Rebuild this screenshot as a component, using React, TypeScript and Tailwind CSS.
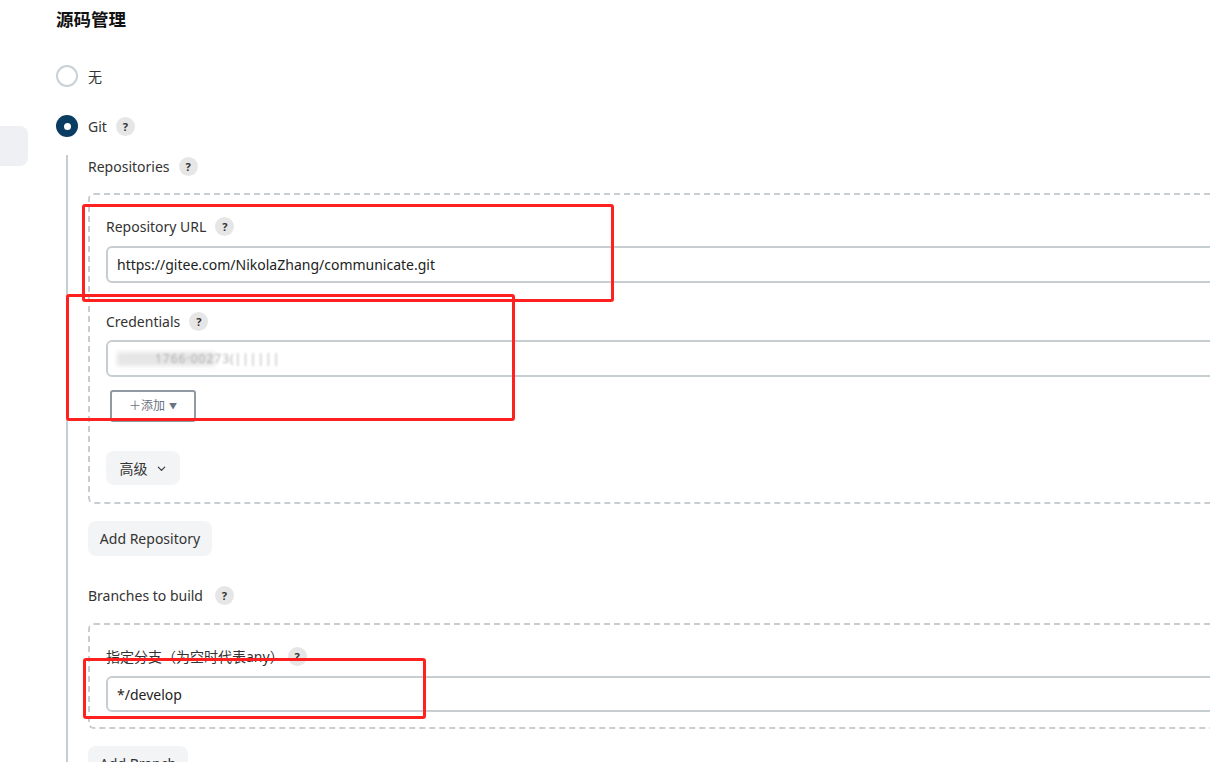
import React from "react";

function Help() {
  return (
    <span className="inline-flex h-[19px] w-[19px] items-center justify-center rounded-full bg-[#e6e6e6] text-[11px] font-bold leading-none text-[#333]">
      ?
    </span>
  );
}

function Label({ text, gap = "gap-[9px]" }: { text: string; gap?: string }) {
  return (
    <div className={`flex h-5 items-center ${gap} text-[14px] text-[#333]`}>
      <span>{text}</span>
      <Help />
    </div>
  );
}

function Input({ children, h = "h-[37px]" }: { children: React.ReactNode; h?: string }) {
  return (
    <div className={`flex ${h} w-[1200px] items-center rounded-[6px] border-2 border-[#c6ced1] bg-white pl-[9px] text-[14px] text-[#222]`}>
      {children}
    </div>
  );
}

export default function App() {
  return (
    <div
      className="relative h-[762px] w-[1210px] overflow-hidden bg-white"
      style={{ fontFamily: '"Noto Sans", "Noto Sans CJK SC", sans-serif' }}
    >
      <div className="flex">
        {/* sidebar stub */}
        <div className="w-[28px] shrink-0">
          <div className="mt-[126px] h-[40px] w-[28px] rounded-r-[8px] bg-[#eef0f3]" />
        </div>

        <div className="ml-[28px] w-[1300px] shrink-0 pt-[7px]">
          <div className="h-6 text-[17.5px] font-bold leading-6 text-[#111]">源码管理</div>

          {/* radio 无 */}
          <div className="mt-[34px] flex h-[22px] items-center gap-[10px] text-[14px] text-[#333]">
            <span className="h-[22px] w-[22px] rounded-full border-2 border-[#c9d2d6] bg-white" />
            <span>无</span>
          </div>

          {/* radio Git */}
          <div className="mt-[28px] flex h-[22px] items-center gap-[10px] text-[14px] text-[#333]">
            <span className="flex h-[22px] w-[22px] items-center justify-center rounded-full bg-[#0b3d62]">
              <span className="h-[7px] w-[7px] rounded-full bg-white" />
            </span>
            <span className="flex items-center gap-[9px]">
              <span>Git</span>
              <Help />
            </span>
          </div>

          {/* nested */}
          <div className="ml-[10px] mt-[18px] border-l-2 border-[#c6ced1] pl-[20px]">
            <div className="pt-px">
              <Label text="Repositories" />
            </div>

            <div className="mt-[17px] rounded-[6px] border-2 border-dashed border-[#c8cdd2] pb-[17px] pl-[16px] pt-[21px]">
              <Label text="Repository URL" />
              <div className="mt-[10px]">
                <Input>https://gitee.com/NikolaZhang/communicate.git</Input>
              </div>

              <div className="mt-[28px]">
                <Label text="Credentials" />
              </div>
              <div className="mt-[9px]">
                <Input>
                  <span className="relative flex items-center">
                    <span className="h-[14px] w-[98px] bg-[#e6e6e6] blur-[2px]" />
                    <span className="ml-[-60px] text-[12px] tracking-[1px] text-[#b0b0b0] blur-[1px]">
                      1766·00273(||||||
                    </span>
                  </span>
                </Input>
              </div>

              <button className="ml-[4px] mt-[13px] flex h-[32px] w-[86px] items-center justify-center gap-[4px] rounded-[3px] border-2 border-[#8f9aa4] bg-white text-[12px] text-[#6b7280]">
                <span>＋添加</span>
                <span className="text-[8px]">▼</span>
              </button>

              <button className="mt-[29px] flex h-[34px] w-[74px] items-center justify-center gap-[8px] rounded-[8px] bg-[#f3f4f6] text-[14px] text-[#333]">
                <span>高级</span>
                <svg width="11" height="11" viewBox="0 0 24 24" fill="none" stroke="#333" strokeWidth="2.5" strokeLinecap="round" strokeLinejoin="round">
                  <path d="M5 9l7 7 7-7" />
                </svg>
              </button>
            </div>

            <button className="mt-[17px] flex h-[35px] w-[124px] items-center justify-center rounded-[8px] bg-[#f3f4f6] text-[14px] text-[#333]">
              Add Repository
            </button>

            <div className="mt-[29px]">
              <Label text="Branches to build" gap="gap-[12px]" />
            </div>

            <div className="mt-[18px] rounded-[6px] border-2 border-dashed border-[#c8cdd2] pb-[15px] pl-[16px] pt-[21px]">
              <Label text="指定分支（为空时代表any）" gap="gap-[4px]" />
              <div className="mt-[10px]">
                <Input h="h-[36px]">*/develop</Input>
              </div>
            </div>

            <button className="mt-[17px] flex h-[35px] w-[100px] items-center justify-center rounded-[8px] bg-[#f3f4f6] text-[14px] text-[#333]">
              Add Branch
            </button>
          </div>
        </div>
      </div>

      {/* red annotation boxes */}
      <div className="absolute left-[82px] top-[204px] h-[98px] w-[532px] rounded-[3px] border-[3px] border-[#ff2020]" />
      <div className="absolute left-[66px] top-[294px] h-[127px] w-[449px] rounded-[3px] border-[3px] border-[#ff2020]" />
      <div className="absolute left-[83px] top-[658px] h-[61px] w-[343px] rounded-[3px] border-[3px] border-[#ff2020]" />
    </div>
  );
}
